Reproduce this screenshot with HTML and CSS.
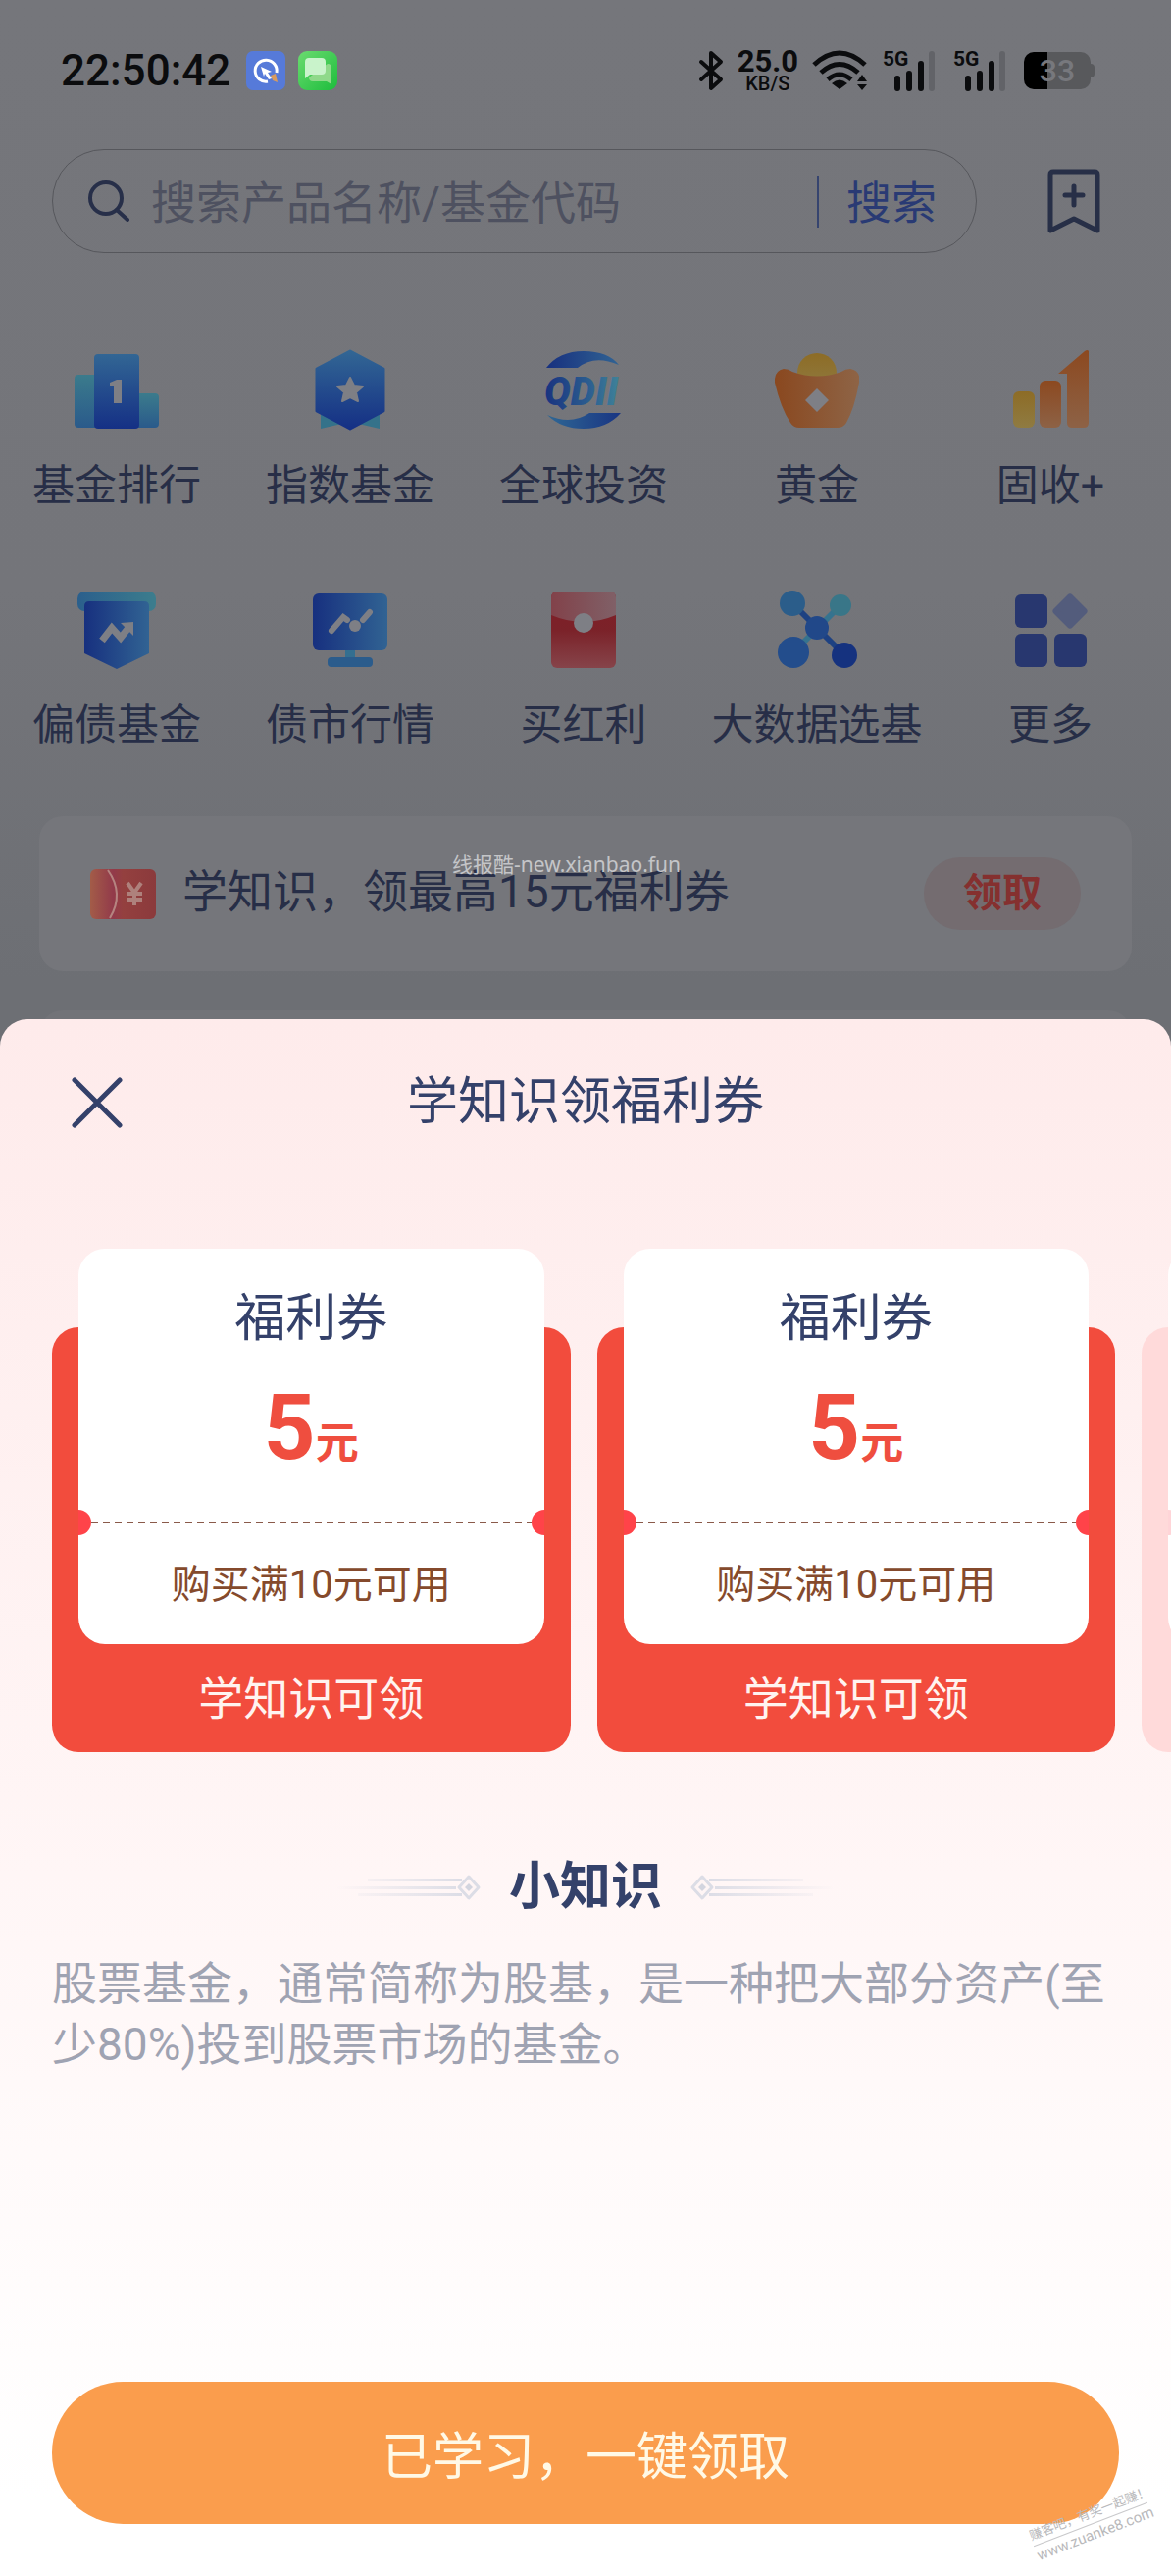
FILE: index.html
```html
<!DOCTYPE html>
<html lang="zh-CN">
<head>
    <meta charset="UTF-8">
    <meta name="viewport" content="width=device-width, initial-scale=1.0">
    <title>学知识领福利券</title>
    <link rel="stylesheet" href="styles.css">
</head>
<body>
    <!-- 渐变定义 -->
    <svg class="defs" width="0" height="0" aria-hidden="true">
        <defs>
            <linearGradient id="blue-v" x1="0" y1="0" x2="0" y2="1"><stop offset="0" stop-color="#326694"/><stop offset="1" stop-color="#153085"/></linearGradient>
            <linearGradient id="blue-h" x1="0" y1="0" x2="1" y2="0"><stop offset="0" stop-color="#17307f"/><stop offset="1" stop-color="#316393"/></linearGradient>
            <linearGradient id="blue-r" x1="0" y1="0" x2="1" y2="0"><stop offset="0" stop-color="#2f6794"/><stop offset="1" stop-color="#193583"/></linearGradient>
            <linearGradient id="qdii-h" x1="0" y1="0" x2="1" y2="0"><stop offset="0" stop-color="#18327f"/><stop offset="0.6" stop-color="#2c5e90"/><stop offset="1" stop-color="#3f8299"/></linearGradient>
            <linearGradient id="cyan-v" x1="0" y1="0" x2="0" y2="1"><stop offset="0" stop-color="#3b7b8c"/><stop offset="1" stop-color="#2a5a8b"/></linearGradient>
            <linearGradient id="cyan-h" x1="0" y1="0" x2="1" y2="0"><stop offset="0" stop-color="#2b5f8c"/><stop offset="1" stop-color="#3c7d8d"/></linearGradient>
            <linearGradient id="orange-h" x1="0" y1="0" x2="1" y2="0"><stop offset="0" stop-color="#8a481f"/><stop offset="1" stop-color="#8e6446"/></linearGradient>
            <linearGradient id="orange-v" x1="0" y1="0" x2="0" y2="1"><stop offset="0" stop-color="#8c4920"/><stop offset="1" stop-color="#8d6246"/></linearGradient>
            <linearGradient id="gold-v" x1="0" y1="0" x2="0" y2="1"><stop offset="0" stop-color="#8d6c26"/><stop offset="1" stop-color="#8f7b42"/></linearGradient>
            <linearGradient id="red-v" x1="0" y1="0" x2="0" y2="1"><stop offset="0" stop-color="#801d26"/><stop offset="0.5" stop-color="#7b2229"/><stop offset="1" stop-color="#86444a"/></linearGradient>
            <linearGradient id="red-flap" x1="0" y1="0" x2="1" y2="0"><stop offset="0" stop-color="#82424a"/><stop offset="1" stop-color="#806067"/></linearGradient>
            <linearGradient id="card-h" x1="0" y1="0" x2="1" y2="0"><stop offset="0" stop-color="#a35c48"/><stop offset="0.35" stop-color="#923a4a"/><stop offset="0.5" stop-color="#94403f"/><stop offset="1" stop-color="#8b3a3c"/></linearGradient>
            <linearGradient id="green" x1="0" y1="0" x2="1" y2="1"><stop offset="0" stop-color="#6bdb70"/><stop offset="1" stop-color="#1dbd3c"/></linearGradient>
            <linearGradient id="fade-l" x1="0" y1="0" x2="1" y2="0"><stop offset="0" stop-color="#dcdde6" stop-opacity="0"/><stop offset="1" stop-color="#dcdde6"/></linearGradient>
        </defs>
    </svg>

    <main class="home">
        <header class="status-bar">
            <span class="time">22:50:42</span>
            <svg class="app-icon" viewBox="0 0 40 40">
                <rect width="40" height="40" rx="7" fill="#567ad9"/>
                <path d="M22 31A11 11 0 1 1 31 22" fill="none" stroke="#fff" stroke-width="3"/>
                <path d="M15 16l11 5-4 1 4 6-3 1-4-6-1 3z" fill="#fff"/>
                <path d="M25 25l5-2 2 9-5-2z" fill="#d99b5e"/>
            </svg>
            <svg class="app-icon" viewBox="0 0 40 40">
                <rect width="40" height="40" rx="9" fill="url(#green)"/>
                <path d="M30 13q4 0 4 4v17l-5-3H15q-4 0-4-4z" fill="#8fd98a"/>
                <path d="M11 7h13q4 0 4 4v9q0 4-4 4H12l-5 4V11q0-4 4-4z" fill="#c9f3cb"/>
            </svg>
            <div class="status-right">
                <svg class="bluetooth" viewBox="0 0 26 42" fill="none" stroke="#0b0c0e" stroke-width="4" stroke-linejoin="round" stroke-linecap="round"><path d="M3 12l20 18-10 9V3l10 9L3 30"/></svg>
                <div class="speed"><b>25.0</b><span>KB/S</span></div>
                <svg class="wifi" viewBox="0 0 58 42" fill="none" stroke="#0b0c0e" stroke-width="5">
                    <path d="M2 15Q28-9 54 15M9 23q19-17 38 0M16 30q12-10 24 0"/>
                    <path d="M28 40l-8-6q8-7 16 0zM51 25l5 7H46zM51 41l5-6H46z" fill="#0b0c0e" stroke="none"/>
                </svg>
                <div class="signal"><small>5G</small><svg viewBox="0 0 42 42"><path d="M3 29v10M15 24v15M27 14v25" stroke="#0b0c0e" stroke-width="6" stroke-linecap="round"/><path d="M38 4v35" stroke="#626368" stroke-width="6" stroke-linecap="round"/></svg></div>
                <div class="signal"><small>5G</small><svg viewBox="0 0 42 42"><path d="M3 29v10M15 24v15M27 14v25" stroke="#0b0c0e" stroke-width="6" stroke-linecap="round"/><path d="M38 4v35" stroke="#626368" stroke-width="6" stroke-linecap="round"/></svg></div>
                <div class="battery">33</div>
            </div>
        </header>

        <div class="search-row">
            <form class="search">
                <svg class="search-icon" viewBox="0 0 42 42" fill="none" stroke="#272f49" stroke-width="4" stroke-linecap="round"><circle cx="18" cy="18" r="16"/><path d="M29 30l11 10"/></svg>
                <input type="text" aria-label="搜索产品名称或基金代码" placeholder="搜索产品名称/基金代码">
                <button type="button" class="search-btn">搜索</button>
            </form>
            <button type="button" class="bookmark" aria-label="收藏">
                <svg viewBox="0 0 54 66" fill="none" stroke="#272f47" stroke-width="5" stroke-linejoin="round" stroke-linecap="round"><path d="M3 63V6q0-3 3-3h42q3 0 3 3v57L27 51z"/><path d="M27 18v19M18 27h18"/></svg>
            </button>
        </div>

        <nav class="menu">
            <a href="#">
                <svg viewBox="0 0 86 86"><rect y="28" width="30" height="54" rx="4" fill="url(#cyan-v)"/><rect x="56" y="47" width="30" height="35" rx="4" fill="url(#cyan-v)"/><rect x="20" y="7" width="46" height="76" rx="4" fill="url(#blue-v)"/><path d="M36 36l7-3h5v24h-8V40h-4z" fill="#7e7f85"/></svg>
                <span>基金排行</span>
            </a>
            <a href="#">
                <svg viewBox="0 0 86 86"><path d="M13 58v25l30-7 30 7V58z" fill="#34728a"/><path d="M43 4l34 18v43L43 83 9 65V22z" fill="url(#blue-v)" stroke="url(#blue-v)" stroke-width="3" stroke-linejoin="round"/><path d="M43 31l4 8 9 1-7 6 2 9-8-4-8 4 2-9-7-6 9-1z" fill="#7e7f85" stroke="#7e7f85" stroke-width="2" stroke-linejoin="round"/></svg>
                <span>指数基金</span>
            </a>
            <a href="#">
                <svg viewBox="0 0 86 86"><path d="M5 21Q18 4 43 4q25 0 36 14Q54 7 37 21z" fill="url(#blue-h)"/><path d="M81 67q-14 16-38 16Q20 83 6 69q24 11 43-2z" fill="url(#blue-r)"/><text class="qdii" x="3" y="59" fill="url(#qdii-h)">QDII</text></svg>
                <span>全球投资</span>
            </a>
            <a href="#">
                <svg viewBox="0 0 86 86"><circle cx="43" cy="26" r="20" fill="url(#gold-v)"/><path d="M9 22q5 0 9 3 25 9 50 0 4-3 9-3 11 2 9 14-5 27-13 41-3 5-9 5H25q-6 0-9-5Q6 62 0 36-1 24 9 22z" fill="url(#orange-h)"/><path d="M43 42l12 12-12 12-12-12z" fill="#7e7f85"/></svg>
                <span>黄金</span>
            </a>
            <a href="#">
                <svg viewBox="0 0 86 86"><rect x="5" y="45" width="22" height="37" rx="6" fill="url(#gold-v)"/><rect x="32" y="34" width="22" height="48" rx="6" fill="url(#orange-v)"/><path d="M82 4v73q0 5-5 5H65q-5 0-5-5V27h-9L78 4q3-2 4 0z" fill="url(#orange-v)"/></svg>
                <span>固收+</span>
            </a>
            <a href="#">
                <svg viewBox="0 0 86 86"><rect x="3" y="5" width="80" height="20" rx="7" fill="url(#cyan-h)"/><path d="M15 15h56q5 0 5 5v48L43 84 10 68V20q0-5 5-5z" fill="url(#blue-h)"/><path d="M28 55l10-13 9 10 8-10" fill="none" stroke="#7e7f85" stroke-width="7"/><path d="M47 37l13-1v14z" fill="#7e7f85"/></svg>
                <span>偏债基金</span>
            </a>
            <a href="#">
                <svg viewBox="0 0 86 86"><path d="M38 64h10v10H38z" fill="#346f90"/><rect x="20" y="72" width="46" height="10" rx="4" fill="#2b5c8c"/><rect x="5" y="7" width="76" height="58" rx="6" fill="url(#blue-h)"/><path d="M24 45l12-14 4 3M56 34l7-8" fill="none" stroke="#7e7f85" stroke-width="6" stroke-linecap="round"/><circle cx="48" cy="40" r="6" fill="#7e7f85"/></svg>
                <span>债市行情</span>
            </a>
            <a href="#">
                <svg viewBox="0 0 86 86"><rect x="10" y="5" width="66" height="78" rx="6" fill="url(#red-v)"/><path d="M10 29V11q0-6 6-6h54q6 0 6 6v18Q43 43 10 29z" fill="url(#red-flap)"/><circle cx="43" cy="37" r="10" fill="#7e7f85"/></svg>
                <span>买红利</span>
            </a>
            <a href="#">
                <svg viewBox="0 0 86 86"><path d="M19 67L67 19" stroke="#35738f" stroke-width="6"/><path d="M18 17l53 53" stroke="#1d4182" stroke-width="6"/><circle cx="18" cy="17" r="13" fill="#2b5d8a"/><circle cx="67" cy="19" r="11" fill="#397688"/><circle cx="43" cy="42" r="12" fill="#214889"/><circle cx="19" cy="67" r="16" fill="#234d8c"/><circle cx="71" cy="70" r="13" fill="#15327f"/></svg>
                <span>大数据选基</span>
            </a>
            <a href="#">
                <svg viewBox="0 0 86 86" fill="#28376f"><rect x="7" y="8" width="33" height="34" rx="6"/><rect x="7" y="48" width="33" height="34" rx="6"/><rect x="47" y="48" width="33" height="34" rx="6"/><path d="M63 11l14 14-14 14-14-14z" fill="#535c7c" stroke="#535c7c" stroke-width="7" stroke-linejoin="round"/></svg>
                <span>更多</span>
            </a>
        </nav>

        <section class="banner">
            <svg class="coupon-icon" viewBox="0 0 67 51"><rect width="67" height="51" rx="6" fill="url(#card-h)"/><path d="M18 1q17 24 2 49" fill="none" stroke="#b58480" stroke-width="2"/><path d="M38 14l7 10 7-10M45 24v13M37 25h16M37 31h16" fill="none" stroke="#ae817c" stroke-width="4"/></svg>
            <span class="banner-text">学知识，领最高15元福利券</span>
            <button type="button" class="banner-btn">领取</button>
            <span class="watermark">线报酷-new.xianbao.fun</span>
        </section>
        <section class="next-card"></section>
    </main>

    <section class="sheet">
        <header class="sheet-header">
            <button type="button" class="close" aria-label="关闭">
                <svg viewBox="0 0 52 52" fill="none" stroke="#34416a" stroke-width="5" stroke-linecap="round"><path d="M3 3l46 46M49 3L3 49"/></svg>
            </button>
            <h1>学知识领福利券</h1>
        </header>

        <div class="coupons">
            <article class="coupon">
                <div class="ticket">
                    <div class="ticket-top">
                        <h3>福利券</h3>
                        <p class="amount">5<small>元</small></p>
                    </div>
                    <p class="condition">购买满10元可用</p>
                </div>
                <p class="coupon-state">学知识可领</p>
            </article>
            <article class="coupon">
                <div class="ticket">
                    <div class="ticket-top">
                        <h3>福利券</h3>
                        <p class="amount">5<small>元</small></p>
                    </div>
                    <p class="condition">购买满10元可用</p>
                </div>
                <p class="coupon-state">学知识可领</p>
            </article>
            <article class="coupon locked">
                <div class="ticket">
                    <div class="ticket-top"></div>
                </div>
            </article>
        </div>

        <div class="tip-title">
            <svg class="ornament" viewBox="0 0 156 28"><path d="M40 5h96v3H40zM8 13h122v3H8zM30 20h106v3H30z" fill="url(#fade-l)"/><path d="M143 3l10 11-10 11-10-11z" fill="#fef5f5" stroke="#dcdde6" stroke-width="3" stroke-linejoin="round"/><path d="M143 10l4 4-4 4-4-4z" fill="#d3d5df"/></svg>
            <h2>小知识</h2>
            <svg class="ornament flip" viewBox="0 0 156 28"><path d="M40 5h96v3H40zM8 13h122v3H8zM30 20h106v3H30z" fill="url(#fade-l)"/><path d="M143 3l10 11-10 11-10-11z" fill="#fef5f5" stroke="#dcdde6" stroke-width="3" stroke-linejoin="round"/><path d="M143 10l4 4-4 4-4-4z" fill="#d3d5df"/></svg>
        </div>
        <p class="tip">股票基金，通常简称为股基，是一种把大部分资产(至少80%)投到股票市场的基金。</p>

        <button type="button" class="submit">已学习，一键领取</button>
        <div class="stamp"><span>赚客吧，有奖一起赚！</span><span>www.zuanke8.com</span></div>
    </section>
</body>
</html>
```
FILE: styles.css
```css
* {
    box-sizing: border-box;
}
body {
    margin: 0;
    min-height: 100vh;
    display: flex;
    flex-direction: column;
    font-family: Roboto, "Noto Sans CJK SC", sans-serif;
    color: #34416a;
    background: linear-gradient(#75767b 0, #74757a 600px, #6d6f74 1000px);
}
h1, h2, h3, p {
    margin: 0;
    font-weight: 400;
}
button {
    padding: 0;
    border: 0;
    background: none;
    font: inherit;
    color: inherit;
}
svg {
    display: block;
    flex: none;
}
.defs {
    position: absolute;
}

/* 状态栏 */
.status-bar {
    display: flex;
    align-items: center;
    height: 144px;
    padding: 0 82px 0 62px;
    color: #0b0c0e;
}
.time {
    margin-right: 16px;
    font-size: 44px;
    font-weight: 500;
}
.app-icon {
    width: 40px;
    height: 40px;
    margin-right: 13px;
}
.status-right {
    display: flex;
    align-items: center;
    gap: 14px;
    margin-left: auto;
}
.bluetooth {
    width: 26px;
    height: 42px;
}
.speed {
    display: flex;
    flex-direction: column;
    align-items: center;
    line-height: 18px;
    font-size: 20px;
    font-weight: 500;
}
.speed b {
    line-height: 26px;
    font-size: 31px;
}
.wifi {
    width: 58px;
    height: 42px;
}
.signal {
    position: relative;
    padding-left: 12px;
}
.signal + .signal {
    margin-left: 4px;
}
.signal small {
    position: absolute;
    left: 0;
    top: 0;
    line-height: 18px;
    font-size: 21px;
    font-weight: 700;
}
.signal svg {
    width: 42px;
    height: 42px;
}
.battery {
    position: relative;
    width: 68px;
    height: 38px;
    margin-left: 4px;
    border-radius: 10px;
    background: linear-gradient(90deg, #000 35%, #58595c 35%);
    color: #77787d;
    line-height: 38px;
    text-align: center;
    font-size: 32px;
    font-weight: 500;
}
.battery::after {
    content: "";
    position: absolute;
    left: 68px;
    top: 12px;
    width: 4px;
    height: 14px;
    border-radius: 0 4px 4px 0;
    background: #58595c;
}

/* 搜索 */
.search-row {
    display: flex;
    align-items: center;
    gap: 72px;
    margin-top: 8px;
    padding: 0 72px 0 53px;
}
.search {
    flex: 1;
    display: flex;
    align-items: center;
    height: 106px;
    padding: 0 40px 0 36px;
    border: 1px solid #56575c;
    border-radius: 53px;
}
.search-icon {
    width: 42px;
    height: 42px;
}
.search input {
    flex: 1;
    min-width: 0;
    margin-left: 22px;
    padding: 4px 0 0;
    border: 0;
    outline: 0;
    background: none;
    font: inherit;
    font-size: 46px;
}
.search input::placeholder {
    color: #4e5160;
    opacity: 1;
}
.search-btn {
    height: 53px;
    padding-left: 28px;
    border-left: 2px solid #36446f;
    line-height: 56px;
    font-size: 46px;
    color: #293a74;
}
.bookmark svg {
    width: 54px;
    height: 66px;
}

/* 功能入口 */
.menu {
    display: grid;
    grid-template-columns: repeat(5, 1fr);
    row-gap: 75px;
    margin-top: 96px;
    padding-right: 4px;
}
.menu a {
    display: flex;
    flex-direction: column;
    align-items: center;
    gap: 27px;
    color: #272e47;
    text-decoration: none;
    white-space: nowrap;
    font-size: 43px;
    line-height: 56px;
}
.menu svg {
    width: 86px;
    height: 86px;
}
.qdii {
    font: italic 900 40px Roboto, sans-serif;
}

/* 福利横幅 */
.banner {
    position: relative;
    display: flex;
    align-items: center;
    height: 158px;
    margin: 65px 40px 0;
    padding: 0 52px;
    border-radius: 24px;
    background: #75767b;
}
.coupon-icon {
    width: 67px;
    height: 51px;
}
.banner-text {
    margin-left: 27px;
    padding-bottom: 4px;
    font-size: 46px;
    line-height: 56px;
    color: #272e47;
}
.banner-btn {
    width: 160px;
    height: 74px;
    margin-left: auto;
    border-radius: 37px;
    background: #746c70;
    font-size: 40px;
    line-height: 70px;
    font-weight: 700;
    color: #85302f;
}
.watermark {
    position: absolute;
    left: 421px;
    top: 36px;
    font: 21px/26px "Noto Sans", "Noto Sans CJK SC", sans-serif;
    color: #c4c5c8;
}
.next-card {
    height: 40px;
    margin: 40px 40px -31px;
    border-radius: 24px 24px 0 0;
    background: #727378;
}

/* 底部弹层 */
.sheet {
    position: relative;
    flex: 1;
    display: flex;
    flex-direction: column;
    padding: 53px 0 53px;
    border-radius: 28px 28px 0 0;
    background: linear-gradient(#feebeb, #fff6f6 55%, #fff 95%);
    overflow: hidden;
}
.sheet-header {
    display: grid;
    grid-template-columns: 52px 1fr 52px;
    align-items: center;
    height: 64px;
    padding: 0 73px;
}
.sheet-header h1 {
    text-align: center;
    font-size: 52px;
    line-height: 64px;
}
.close svg {
    width: 52px;
    height: 52px;
}

.coupons {
    display: flex;
    gap: 27px;
    margin-top: 117px;
    padding: 80px 0 0 53px;
    overflow: hidden;
}
.coupon {
    flex: 0 0 calc(50% - 42px);
    display: flex;
    flex-direction: column;
    border-radius: 27px;
    background: #f24c3d;
    text-align: center;
}
.ticket {
    position: relative;
    margin: -80px 27px 0;
    border-radius: 27px;
    background: #fff;
    overflow: hidden;
}
.ticket-top {
    height: 280px;
    padding-top: 40px;
}
/* 撕票虚线 */
.ticket-top::after {
    content: "";
    position: absolute;
    left: 13px;
    right: 13px;
    top: 279px;
    height: 1px;
    background: repeating-linear-gradient(90deg, #8a5a4a 0 7px, transparent 7px 12px);
}
.ticket::before,
.ticket::after {
    content: "";
    position: absolute;
    top: 266px;
    width: 26px;
    height: 26px;
    border-radius: 50%;
    background: #ff4349;
}
.ticket::before {
    left: -13px;
}
.ticket::after {
    right: -13px;
}
.coupon h3 {
    font-size: 52px;
    line-height: 64px;
}
.amount {
    margin-top: 21px;
    font-size: 92px;
    line-height: 116px;
    font-weight: 700;
    color: #ef4e3f;
}
.amount small {
    font-size: 44px;
}
.condition {
    height: 123px;
    font-size: 40px;
    line-height: 125px;
    color: #854a2c;
}
.coupon-state {
    padding-top: 2px;
    font-size: 46px;
    line-height: 108px;
    color: #fff3f0;
}
.locked {
    background: #ffdada;
}
.locked .ticket {
    height: 403px;
}
.locked .ticket::before,
.locked .ticket::after {
    background: #ffd5d8;
}

/* 小知识 */
.tip-title {
    display: flex;
    align-items: center;
    justify-content: center;
    gap: 28px;
    margin-top: 106px;
}
.tip-title h2 {
    font-size: 52px;
    line-height: 64px;
    font-weight: 700;
}
.ornament {
    width: 156px;
    height: 28px;
}
.flip {
    transform: scaleX(-1);
}
.tip {
    margin: 35px 53px 0;
    font-size: 46px;
    line-height: 62px;
    color: #9fa3b2;
}
.submit {
    height: 145px;
    margin: auto 53px 0;
    border-radius: 73px;
    background: #fa9d4d;
    font-size: 52px;
    color: #fff9e6;
}
.stamp {
    position: absolute;
    right: 20px;
    bottom: 32px;
    display: flex;
    flex-direction: column;
    transform: rotate(-21deg);
    font-size: 15px;
    line-height: 20px;
    white-space: nowrap;
    color: #b9b9bb;
}
.stamp span {
    width: 124px;
}
.stamp span:first-child {
    font-size: 13px;
}
.stamp span + span {
    border-top: 1px solid #c9c9cb;
}
```
